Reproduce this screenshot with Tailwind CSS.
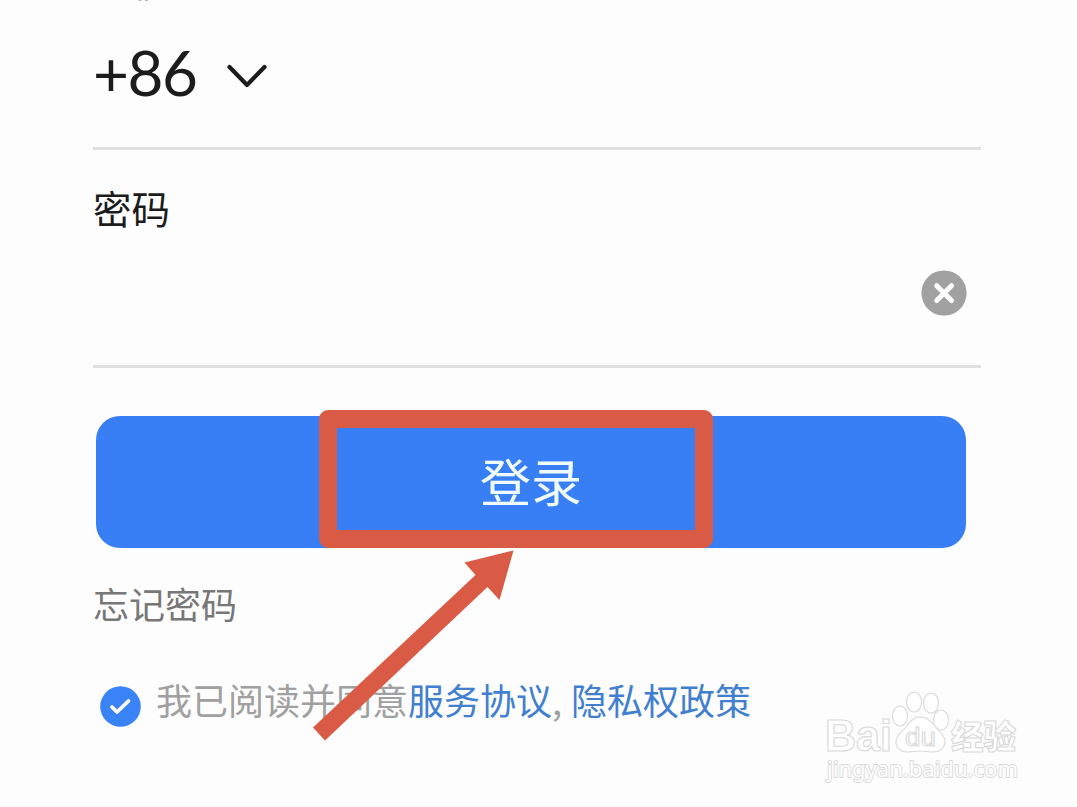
<!DOCTYPE html>
<html lang="zh-CN">
<head>
<meta charset="utf-8">
<title>登录</title>
<script src="https://cdn.jsdelivr.net/npm/@tailwindcss/browser@4"></script>
</head>
<body class="bg-[#fdfdfd] font-['Noto_Sans_CJK_SC',sans-serif]">
<main class="relative flex h-[807px] w-[1077px] flex-col overflow-hidden pr-24 pl-[93px]">
  <div class="flex h-[150px] shrink-0 items-center gap-[30px] border-b-3 border-[#e0e0e0]">
    <span class="pb-[3px] font-['Lato',sans-serif] text-[62px] leading-[147px] tracking-[-1.4px] text-[#1c1c1c]">+86</span>
    <svg class="mt-1 h-7 w-10" viewBox="0 0 40 28" fill="none" stroke="#1c1c1c" stroke-width="4.200" stroke-linecap="round" stroke-linejoin="round"><path d="M2.500 5 20 23 37.500 5"/></svg>
  </div>
  <div class="flex h-[218px] shrink-0 flex-col border-b-3 border-[#e0e0e0] pt-[29px]">
    <label class="text-[38.5px] leading-[56px] text-[#1c1c1c]">密码</label>
    <div class="mt-0.5 flex h-28 items-center justify-end pr-[14px]">
      <svg class="size-[46px]" viewBox="0 0 46 46"><circle cx="23" cy="23" r="22.6" fill="#a1a1a1"/><path d="m15.7 15.7 14.8 14.8m0-14.8L15.7 30.5" stroke="#fff" stroke-width="5" stroke-linecap="round"/></svg>
    </div>
  </div>
  <button class="mt-12 ml-[3px] h-[132px] w-[870px] shrink-0 rounded-[24px] bg-[#387ef5] pb-1 text-[51px] text-[#f0fbff]">登录</button>
  <a class="mt-[27px] text-[36px] leading-[56px] text-[#777]">忘记密码</a>
  <div class="mt-[39px] flex items-center">
    <svg class="mt-4 mr-[15px] ml-[7px] size-[41px]" viewBox="0 0 41 41" fill="none"><circle cx="20.5" cy="20.5" r="20.3" fill="#3983f6"/><path d="m12 21 5 5L28.500 15" stroke="#fff" stroke-width="3.800" stroke-linecap="round" stroke-linejoin="round"/></svg>
    <p class="flex text-[36px] leading-[56px] text-[#a0a0a0]"><span>我已阅读并同意</span><a class="text-[#417fd0]">服务协议</a><span class="w-[19px]">,</span><a class="text-[#417fd0]">隐私权政策</a></p>
  </div>

  <div class="absolute top-[410px] left-[319px] h-[138px] w-[394px] rounded-[9px] border-18 border-[#d95b45]"></div>
  <svg class="absolute top-[540px] left-[300px] h-[210px] w-[230px]" viewBox="0 0 230 210"><path fill="#d95b45" d="M213.500 10.500 199.500 60 187.500 47 25 200.500 13 187.500 175.500 35 164.500 22.500Z"/></svg>
  <svg class="absolute top-[680px] left-[810px] h-[110px] w-[230px] font-['Liberation_Sans','Noto_Sans_CJK_SC',sans-serif]" viewBox="0 0 230 110" fill="#fff" stroke="#d9d9d9" stroke-width="1.100">
    <text x="15" y="71" font-size="44" font-weight="700" textLength="67" lengthAdjust="spacingAndGlyphs">Bai</text>
    <ellipse cx="90" cy="36" rx="7.500" ry="10"/><ellipse cx="104" cy="22" rx="7.500" ry="10"/><ellipse cx="121" cy="23" rx="7.500" ry="10"/><ellipse cx="131" cy="40" rx="7.500" ry="10"/>
    <path d="M110 37c-7 0-10 5-14 10-5 6-10 8-10 15 0 6 5 10 11 10 5 0 8-1 13-1s8 1 13 1c7 0 12-4 12-11 0-6-6-9-10-15-4-5-8-9-15-9Z"/>
    <text x="95" y="66" font-size="26" textLength="31" lengthAdjust="spacingAndGlyphs">du</text>
    <text class="font-['Noto_Sans_CJK_SC']" x="141" y="69" font-size="33" font-weight="900" textLength="65" lengthAdjust="spacingAndGlyphs">经验</text>
    <text class="font-['Noto_Sans']" x="17" y="97" font-size="22" stroke-width="1.800" paint-order="stroke" textLength="191" lengthAdjust="spacingAndGlyphs">jingyan.baidu.com</text>
  </svg>
  <svg class="absolute top-0 left-[138px] h-[2px] w-3" viewBox="0 0 12 2" fill="#b8b8b8"><path d="M0 0h4L3 1H1zM7 0h4L9 1H7z"/></svg>
</main>
</body>
</html>
